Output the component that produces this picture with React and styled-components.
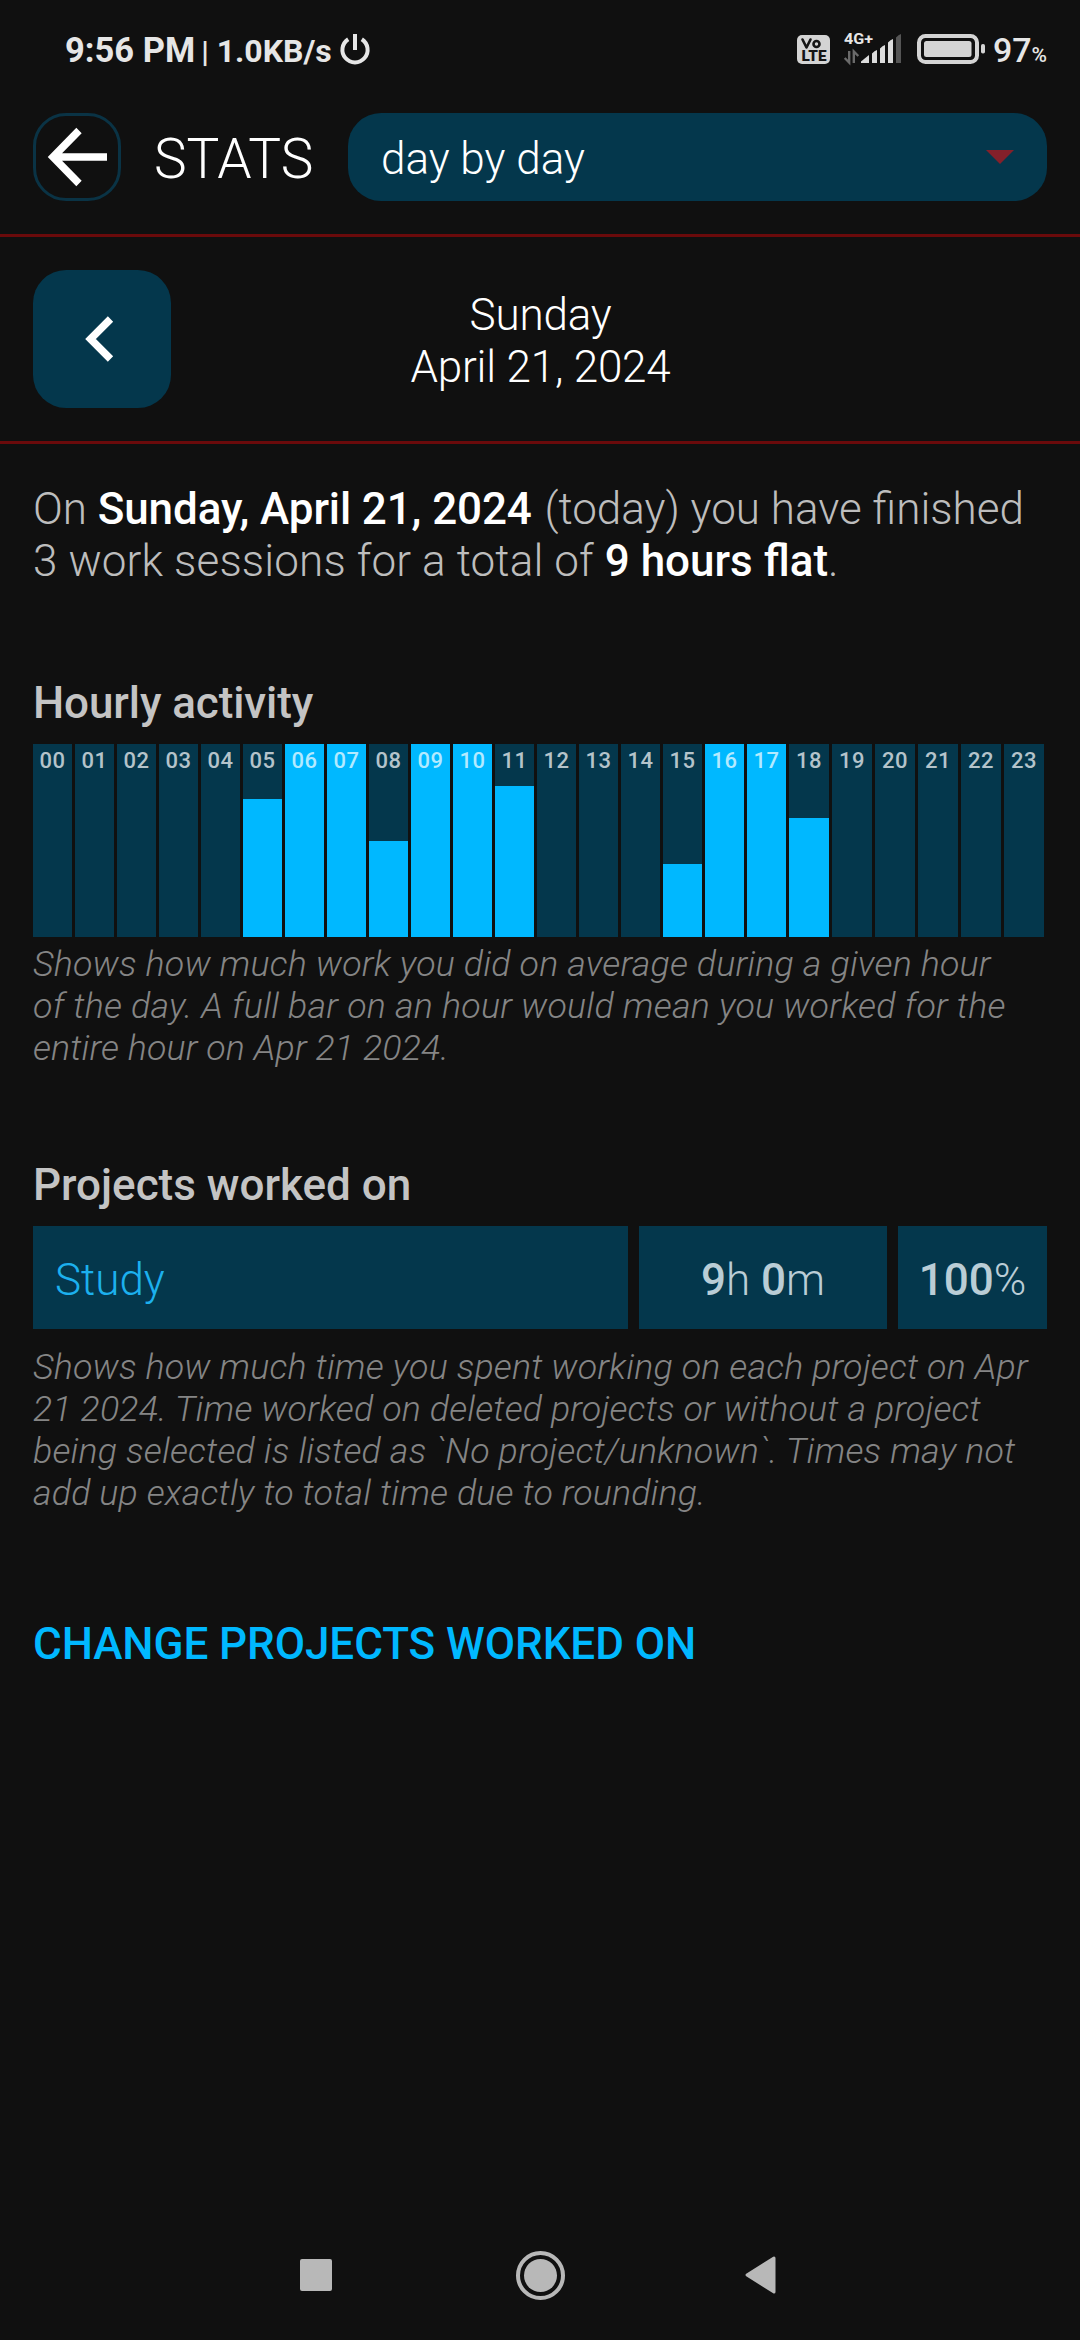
import React from "react";
import styled, { createGlobalStyle } from "styled-components";

const color = {
  bg: "#101010",
  panel: "#04374c",
  accent: "#00b8ff",
  rule: "#6a0a0b",
  status: "#e6e6e6",
  nav: "#b8b8b8",
};

const GlobalStyle = createGlobalStyle`
  * { box-sizing: border-box; }
  html, body { margin: 0; background: ${color.bg}; }
  body { font-family: Roboto, "Liberation Sans", sans-serif; font-weight: 300; }
  button { font: inherit; border: 0; padding: 0; margin: 0; cursor: pointer; }
  svg { display: block; flex: none; }
`;

const Screen = styled.div`
  width: 1080px;
  height: 2340px;
  display: flex;
  flex-direction: column;
  background: ${color.bg};
  color: #fff;
  overflow: hidden;
`;

const StatusBar = styled.div`
  height: 80px;
  flex: none;
  display: flex;
  justify-content: space-between;
  padding: 29px 33px 0 65px;
  color: ${color.status};
`;

const StatusGroup = styled.div`
  display: flex;
  align-items: baseline;
  height: 42px;
  white-space: pre;
`;

const StatusIcons = styled.div`
  display: flex;
  align-items: flex-start;
  height: 42px;
`;

const StatusText = styled.span`
  font-size: ${(p) => p.$size}px;
  font-weight: ${(p) => p.$weight || 700};
  line-height: 42px;
  margin-left: ${(p) => p.$gap || 0}px;
`;

const PowerIcon = styled.svg`
  align-self: flex-start;
  margin: 4px 0 0 7px;
`;

const StatusGlyphs = styled.svg`
  margin-right: 6px;
`;

const Header = styled.header`
  height: 157px;
  flex: none;
  display: flex;
  align-items: flex-start;
  padding: 33px 33px 0;
  border-bottom: 3px solid ${color.rule};
`;

const BackButton = styled.button`
  width: 88px;
  height: 88px;
  display: flex;
  align-items: center;
  justify-content: center;
  color: #fff;
  background: transparent;
  border: 3px solid #0a3345;
  border-radius: 33px;
`;

const Title = styled.h1`
  width: 227px;
  margin: 0;
  padding-left: 33px;
  font-size: 55px;
  font-weight: 300;
  line-height: 93px;
`;

const RangeSelect = styled.button`
  flex: 1;
  height: 88px;
  display: flex;
  align-items: center;
  justify-content: space-between;
  padding: 4px 33px 0 33px;
  color: #fff;
  background: ${color.panel};
  border-radius: 33px;
  font-size: 44px;
`;

const Caret = styled.span`
  width: 0;
  height: 0;
  margin-bottom: 4px;
  border: 14px solid transparent;
  border-bottom: 0;
  border-top-color: #84202a;
`;

const DateNav = styled.div`
  height: 207px;
  flex: none;
  display: grid;
  grid-template-columns: 138px 1fr 138px;
  align-items: center;
  padding: 0 33px;
  border-bottom: 3px solid ${color.rule};
`;

const PrevButton = styled.button`
  width: 138px;
  height: 138px;
  display: flex;
  align-items: center;
  justify-content: center;
  padding-right: 6px;
  color: #fff;
  background: ${color.panel};
  border-radius: 33px;
`;

const DateLabel = styled.div`
  padding: 4px 0 0 1px;
  font-size: 44px;
  line-height: 52px;
  letter-spacing: -0.2px;
  text-align: center;
`;

const Content = styled.main`
  flex: 1;
  padding: 39px 33px 0;
`;

const Line = styled.span`
  display: block;
  letter-spacing: ${(p) => p.$track || 0}px;
`;

const Summary = styled.p`
  margin: 0;
  color: #bdbdbd;
  font-size: 44px;
  line-height: 52px;
  white-space: nowrap;
`;

const Strong = styled.strong`
  margin-right: ${(p) => p.$gap || 0}px;
  color: #fff;
  font-weight: 500;
  letter-spacing: ${(p) => p.$track || 0}px;
`;

const Heading = styled.h2`
  margin: 90px 0 15px;
  color: #c4c4c4;
  font-size: 44px;
  font-weight: 500;
  line-height: 52px;
  letter-spacing: ${(p) => p.$track || 0}px;
`;

const Chart = styled.div`
  width: 1011px;
  height: 193px;
  display: flex;
  gap: 3px;
`;

const Hour = styled.div`
  width: ${(p) => p.$width}px;
  flex: none;
  padding-top: 4px;
  color: ${(p) => (p.$fill === 193 ? "#b3eaff" : "#b4c3ca")};
  background: linear-gradient(
    to top,
    ${color.accent} ${(p) => p.$fill}px,
    ${color.panel} ${(p) => p.$fill}px
  );
  font-size: 22px;
  font-weight: 500;
  line-height: 25px;
  letter-spacing: 0.5px;
  text-align: center;
`;

const Caption = styled.p`
  margin: ${(p) => p.$top}px 0 0;
  color: #858585;
  font-size: 35.75px;
  font-style: italic;
  line-height: 42px;
  white-space: nowrap;
`;

const ProjectRow = styled.div`
  display: grid;
  grid-template-columns: 595px 248px 149px;
  gap: 11px;
`;

const Cell = styled.div`
  height: 103px;
  display: flex;
  align-items: center;
  justify-content: ${(p) => (p.$name ? "flex-start" : "center")};
  padding: 4px 0 0 ${(p) => (p.$name ? 22 : 0)}px;
  color: ${(p) => (p.$name ? "#1cb0ee" : "#bacdd6")};
  background: ${color.panel};
  font-size: 44px;
  white-space: pre;
`;

const Figure = styled.b`
  font-weight: 500;
`;

const ChangeLink = styled.button`
  display: block;
  margin-top: 104px;
  color: ${color.accent};
  background: none;
  font-size: 44px;
  font-weight: 500;
  line-height: 52px;
  letter-spacing: -0.06px;
  white-space: nowrap;
`;

const NavBar = styled.nav`
  height: 130px;
  flex: none;
  display: flex;
  justify-content: center;
`;

const NavButton = styled.button`
  width: 224px;
  height: 130px;
  display: flex;
  align-items: center;
  justify-content: center;
  padding-right: ${(p) => p.$inset || 0}px;
  background: none;
`;

const fills = { 5: 138, 6: 193, 7: 193, 8: 96, 9: 193, 10: 193, 11: 151, 15: 73, 16: 193, 17: 193, 18: 119 };
const hours = Array.from({ length: 24 }, (_, h) => ({
  label: String(h).padStart(2, "0"),
  width: h < 18 ? 39 : 40,
  fill: fills[h] || 0,
}));

export default function App() {
  return (
    <Screen>
      <GlobalStyle />
      <StatusBar>
        <StatusGroup>
          <StatusText $size={34.5}>9:56 PM</StatusText>
          <StatusText $size={30} $weight={700} $gap={6}>|</StatusText>
          <StatusText $size={32} $gap={8}>1.0KB/s</StatusText>
          <PowerIcon width="32" height="32" viewBox="0 0 32 32" fill="none" stroke={color.status} strokeWidth="4">
            <path d="M9.2 6.2A12.6 12.6 0 1 0 22.8 6.2M16 1v16" />
          </PowerIcon>
        </StatusGroup>
        <StatusIcons>
          <StatusGlyphs width="190" height="42" viewBox="796 29 190 42">
            <rect x="796" y="35" width="33" height="29" rx="5" fill="#d4d4d4" />
            <g fill="none" stroke="#151515" strokeWidth="2.6" strokeLinecap="round" strokeLinejoin="round">
              <path d="M801.5 39.5l4 8 4-8" />
              <circle cx="815.5" cy="44" r="3" />
            </g>
            <text x="800.5" y="60.5" fill="#151515" fontSize="14" fontWeight="900" textLength="25" lengthAdjust="spacingAndGlyphs">LTE</text>
            <text x="843" y="44" fill="#e6e6e6" fontSize="15.5" fontWeight="700" textLength="29" lengthAdjust="spacingAndGlyphs">4G+</text>
            <path d="M848.2 51v11.5l-4.5-4.5M852.800 63V51.500l4.500 4.500" fill="none" stroke="#6a6a6a" strokeWidth="2.4" />
            <g fill="#dcdcdc">
              <path d="M860 63v-1.5l8-6.5v8z" />
              <path d="M871 63V53.5q2.5-3 5-3.5v13z" />
              <path d="M879 63V48.5q2.5-3 5-3.5v18z" />
              <path d="M887 63V42.5q2.5-3 5-3.5v24z" />
            </g>
            <path d="M895 63V37.5q2.5-3 5-3.5v29z" fill="#555" />
            <rect x="918" y="36" width="58" height="26" rx="6.5" fill="none" stroke="#d4d4d4" strokeWidth="4" />
            <rect x="923" y="41" width="47.5" height="16" rx="2.5" fill="#d4d4d4" />
            <rect x="980" y="44" width="4" height="9.5" rx="1.8" fill="#d4d4d4" />
          </StatusGlyphs>
          <StatusGroup>
            <StatusText $size={34} $weight={500}>97</StatusText>
            <StatusText $size={21} $weight={500}>%</StatusText>
          </StatusGroup>
        </StatusIcons>
      </StatusBar>

      <Header>
        <BackButton aria-label="Back">
          <svg width="60" height="60" viewBox="0 0 60 60" fill="none" stroke="#fff" strokeWidth="7.5">
            <path d="M32 3.5L6 30l26 26.5M6 30h54" />
          </svg>
        </BackButton>
        <Title>STATS</Title>
        <RangeSelect>
          day by day
          <Caret />
        </RangeSelect>
      </Header>

      <DateNav>
        <PrevButton aria-label="Previous day">
          <svg width="30" height="46" viewBox="0 0 30 46" fill="none" stroke="#fff" strokeWidth="7.5">
            <path d="M26.5 3L6.5 23l20 20" />
          </svg>
        </PrevButton>
        <DateLabel>
          Sunday
          <br />
          April 21, 2024
        </DateLabel>
      </DateNav>

      <Content>
        <Summary>
          <Line>
            On <Strong $track={-0.12} $gap={2}>Sunday, April 21, 2024</Strong> (today) you have finished
          </Line>
          <Line $track={0.14}>
            3 work sessions for a total of <Strong>9 hours flat</Strong>.
          </Line>
        </Summary>

        <Heading $track={-0.1}>Hourly activity</Heading>
        <Chart>
          {hours.map((h) => (
            <Hour key={h.label} $width={h.width} $fill={h.fill}>
              {h.label}
            </Hour>
          ))}
        </Chart>
        <Caption $top={6}>
          <Line $track={0.19}>Shows how much work you did on average during a given hour</Line>
          <Line $track={0.24}>of the day. A full bar on an hour would mean you worked for the</Line>
          <Line $track={0.13}>entire hour on Apr 21 2024.</Line>
        </Caption>

        <Heading>Projects worked on</Heading>
        <ProjectRow>
          <Cell $name>Study</Cell>
          <Cell>
            <Figure>9</Figure>h <Figure>0</Figure>m
          </Cell>
          <Cell>
            <Figure>100</Figure>%
          </Cell>
        </ProjectRow>
        <Caption $top={17}>
          <Line $track={0.17}>Shows how much time you spent working on each project on Apr</Line>
          <Line $track={0.16}>21 2024. Time worked on deleted projects or without a project</Line>
          <Line $track={0.19}>being selected is listed as `No project/unknown`. Times may not</Line>
          <Line $track={0.15}>add up exactly to total time due to rounding.</Line>
        </Caption>

        <ChangeLink>CHANGE PROJECTS WORKED ON</ChangeLink>
      </Content>

      <NavBar>
        <NavButton aria-label="Recent apps">
          <svg width="32" height="32" viewBox="0 0 32 32">
            <rect width="32" height="32" rx="2" fill={color.nav} />
          </svg>
        </NavButton>
        <NavButton aria-label="Home">
          <svg width="50" height="50" viewBox="0 0 50 50">
            <circle cx="25.5" cy="25.5" r="22.5" fill="none" stroke={color.nav} strokeWidth="4" />
            <circle cx="25.5" cy="25.5" r="16.5" fill={color.nav} />
          </svg>
        </NavButton>
        <NavButton $inset={6} aria-label="Back">
          <svg width="32" height="38" viewBox="0 0 32 38">
            <path d="M2 19L29 2v34z" fill={color.nav} stroke={color.nav} strokeWidth="3" strokeLinejoin="round" />
          </svg>
        </NavButton>
      </NavBar>
    </Screen>
  );
}
